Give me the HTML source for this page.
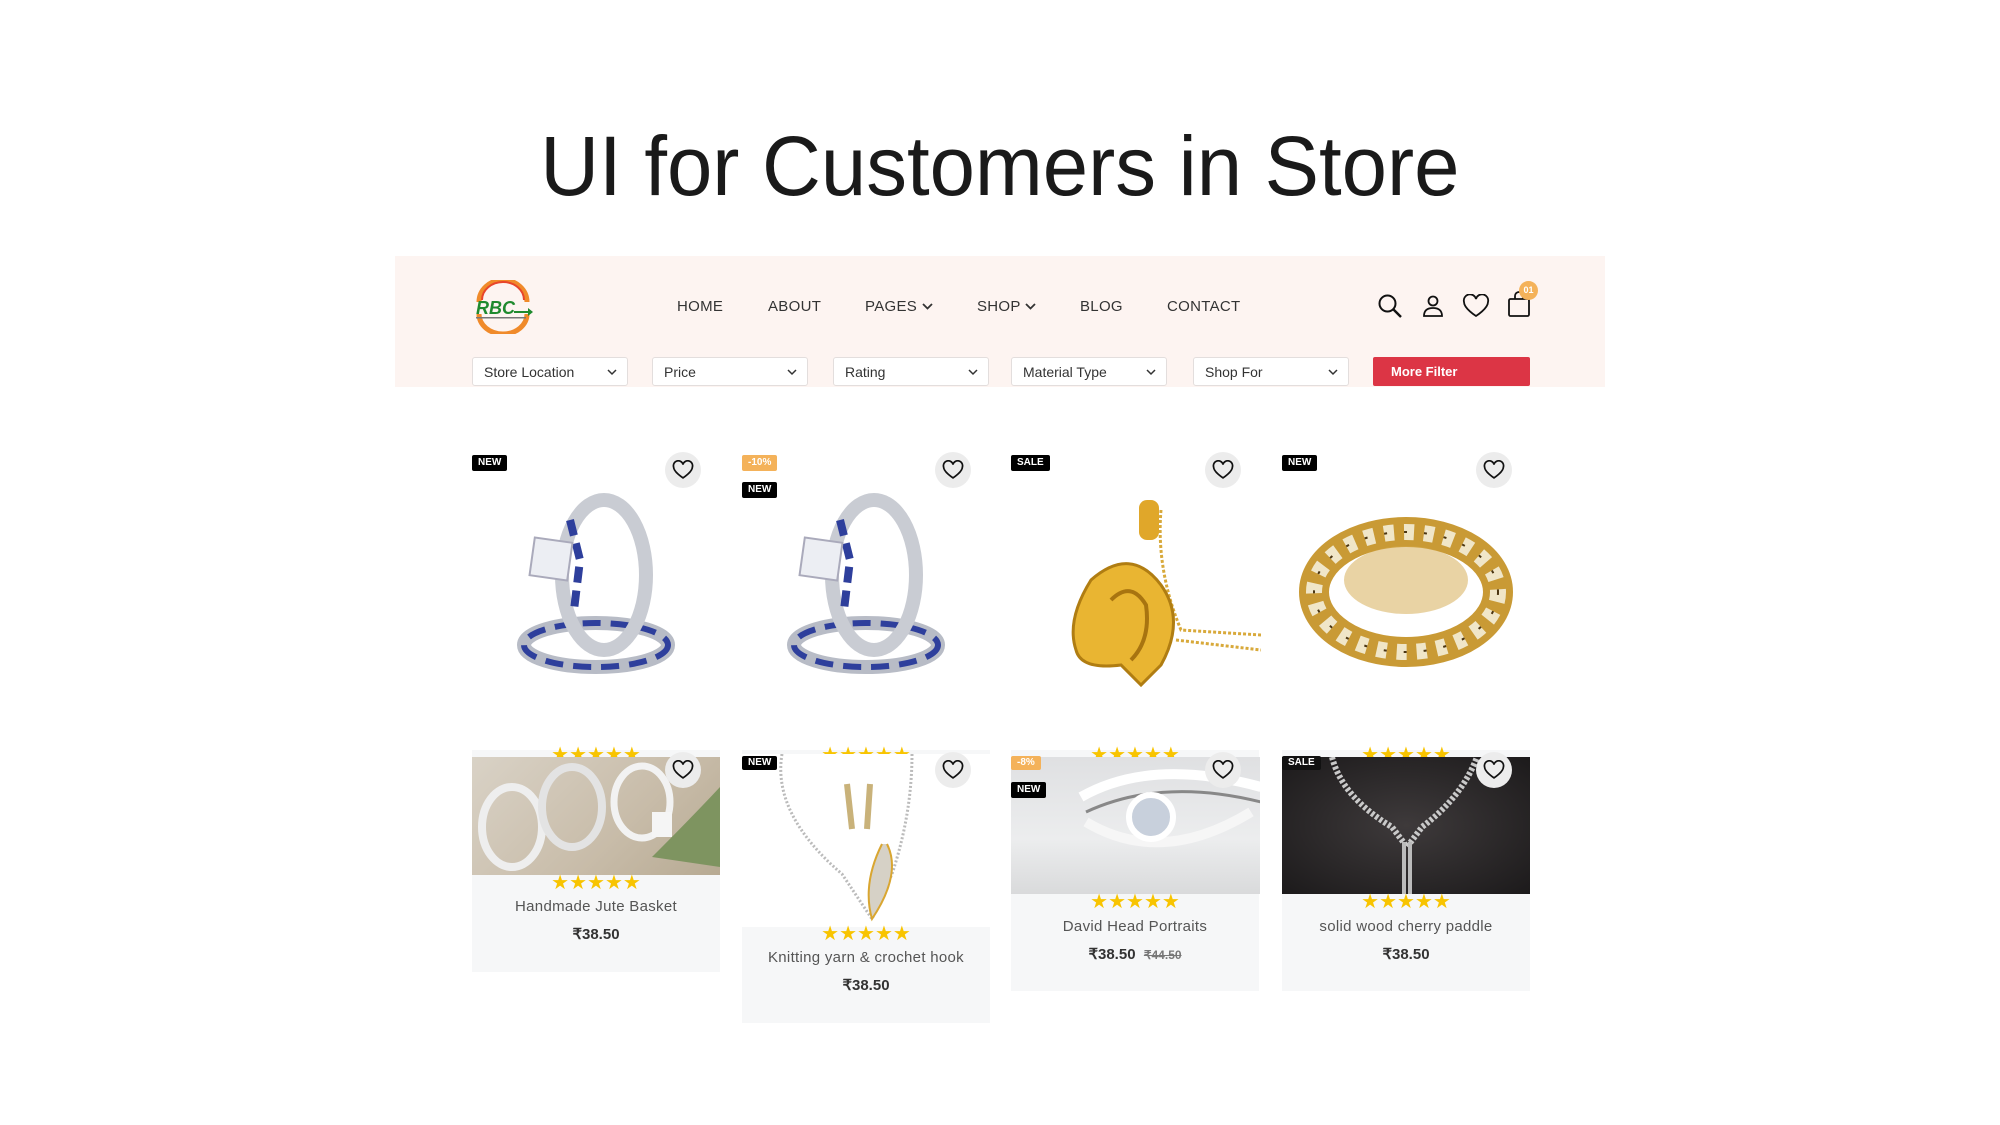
<!DOCTYPE html>
<html><head><meta charset="utf-8"><style>
*{margin:0;padding:0;box-sizing:border-box}
body{width:2000px;height:1125px;background:#fff;position:relative;overflow:hidden;font-family:"Liberation Sans",sans-serif;color:#222}
.a{position:absolute}
.title{position:absolute;left:0;width:2000px;top:116px;text-align:center;font-size:84px;line-height:100px;color:#1a1a1a}
.title span{display:inline-block;transform:scaleX(0.97);transform-origin:center}
.hdr{position:absolute;left:395px;top:256px;width:1210px;height:131px;background:#fdf4f1}
.nav{position:absolute;top:298px;font-size:15px;color:#333;letter-spacing:0.3px}
.sel{position:absolute;top:357px;height:29px;width:156px;background:#fff;border:1px solid #e3dedd;border-radius:3px;font-size:14px;padding:6px 0 0 11px;color:#333}
.sel svg{position:absolute;right:10px;top:11px}
.badge{position:absolute;height:16px;font-size:10px;font-weight:bold;color:#fff;background:#000;padding:2px 6px;border-radius:2px;line-height:12px}
.or{background:#f4b25a}
.hc{position:absolute;width:36px;height:36px;border-radius:50%;background:#ececec}
.hc svg{position:absolute;left:7px;top:8px}
.card{position:absolute;width:248px;background:#f6f7f8}
.stars{position:absolute;left:0;width:248px;text-align:center;color:#f8c400;font-size:20px;letter-spacing:0px;line-height:18px}
.nm{position:absolute;left:0;width:248px;text-align:center;font-size:15px;color:#555;letter-spacing:0.3px}
.pr{position:absolute;left:0;width:248px;text-align:center;font-size:15px;color:#333;font-weight:bold}
</style></head><body>
<div class="title"><span>UI for Customers in Store</span></div>

<div class="hdr"></div>
<svg class="a" style="left:470px;top:280px" width="66" height="54" viewBox="0 0 66 54">
<path d="M9 22 A24 22 0 0 1 57 22" fill="none" stroke="#f08a2a" stroke-width="5"/>
<path d="M12 20 A21 18 0 0 1 54 20" fill="none" stroke="#e8452b" stroke-width="2"/>
<path d="M9 34 A24 20 0 0 0 57 34" fill="none" stroke="#f08a2a" stroke-width="5"/>
<text x="6" y="34" font-family="Liberation Sans" font-weight="bold" font-style="italic" font-size="18" fill="#1f8a2e">RBC</text>
<path d="M44 31 L58 31 L58 28 L63 32 L58 36 L58 33 L44 33z" fill="#1f8a2e"/>
<rect x="6" y="37" width="50" height="1.5" fill="#777"/>
</svg>
<div class="nav" style="left:677px">HOME</div>
<div class="nav" style="left:768px">ABOUT</div>
<div class="nav" style="left:865px">PAGES <svg width="11" height="8" viewBox="0 0 11 8"><path d="M1 1l4.5 4.5L10 1" fill="none" stroke="#333" stroke-width="1.8"/></svg></div>
<div class="nav" style="left:977px">SHOP <svg width="11" height="8" viewBox="0 0 11 8"><path d="M1 1l4.5 4.5L10 1" fill="none" stroke="#333" stroke-width="1.8"/></svg></div>
<div class="nav" style="left:1080px">BLOG</div>
<div class="nav" style="left:1167px">CONTACT</div>
<svg class="a" style="left:1377px;top:293px" width="26" height="26" viewBox="0 0 26 26"><circle cx="10.5" cy="10.5" r="8" fill="none" stroke="#111" stroke-width="2"/><path d="M16.5 16.5L24 24" stroke="#111" stroke-width="2.4"/></svg>
<svg class="a" style="left:1422px;top:294px" width="22" height="24" viewBox="0 0 22 24"><circle cx="11" cy="7" r="4.5" fill="none" stroke="#111" stroke-width="1.8"/><path d="M2 22 Q2 14 11 14 Q20 14 20 22Z" fill="none" stroke="#111" stroke-width="1.8"/></svg>
<svg class="a" style="left:1462px;top:294px" width="28" height="24" viewBox="0 0 28 24"><path d="M14 22S2 14.5 2 8A6 6 0 0 1 14 5A6 6 0 0 1 26 8C26 14.5 14 22 14 22z" fill="none" stroke="#111" stroke-width="1.8"/></svg>
<svg class="a" style="left:1507px;top:290px" width="24" height="28" viewBox="0 0 24 28"><path d="M8 9V6a4 4 0 0 1 8 0v3" fill="none" stroke="#111" stroke-width="1.8"/><rect x="2" y="9" width="20" height="17" rx="1.5" fill="none" stroke="#111" stroke-width="1.8"/></svg>
<div class="a" style="left:1519px;top:281px;width:19px;height:19px;border-radius:50%;background:#f4b25a;color:#fff;font-size:9px;font-weight:bold;text-align:center;line-height:19px">01</div>

<div class="sel" style="left:472px">Store Location<svg width="10" height="7" viewBox="0 0 10 7"><path d="M1 1l4 4 4-4" fill="none" stroke="#333" stroke-width="1.5"/></svg></div>
<div class="sel" style="left:652px">Price<svg width="10" height="7" viewBox="0 0 10 7"><path d="M1 1l4 4 4-4" fill="none" stroke="#333" stroke-width="1.5"/></svg></div>
<div class="sel" style="left:833px">Rating<svg width="10" height="7" viewBox="0 0 10 7"><path d="M1 1l4 4 4-4" fill="none" stroke="#333" stroke-width="1.5"/></svg></div>
<div class="sel" style="left:1011px">Material Type<svg width="10" height="7" viewBox="0 0 10 7"><path d="M1 1l4 4 4-4" fill="none" stroke="#333" stroke-width="1.5"/></svg></div>
<div class="sel" style="left:1193px">Shop For<svg width="10" height="7" viewBox="0 0 10 7"><path d="M1 1l4 4 4-4" fill="none" stroke="#333" stroke-width="1.5"/></svg></div>
<div class="a" style="left:1373px;top:357px;width:157px;height:29px;background:#dc3545;border-radius:2px;color:#fff;font-size:13px;font-weight:bold;padding:7px 0 0 18px">More Filter</div>

<svg class="a" style="left:472px;top:480px" width="248" height="220" viewBox="0 0 248 220">
<ellipse cx="124" cy="165" rx="72" ry="22" fill="none" stroke="#b8bcc6" stroke-width="14"/>
<ellipse cx="124" cy="165" rx="72" ry="22" fill="none" stroke="#2e3f9c" stroke-width="6" stroke-dasharray="18 10"/>
<ellipse cx="132" cy="95" rx="42" ry="75" fill="none" stroke="#c9ccd3" stroke-width="14"/>
<path d="M98 40 L108 80 L102 130" fill="none" stroke="#2e3f9c" stroke-width="8" stroke-dasharray="16 8"/>
<rect x="60" y="60" width="38" height="38" fill="#eceef3" stroke="#aab" stroke-width="2" transform="rotate(8 79 79)"/>
</svg>
<svg class="a" style="left:742px;top:480px" width="248" height="220" viewBox="0 0 248 220">
<ellipse cx="124" cy="165" rx="72" ry="22" fill="none" stroke="#b8bcc6" stroke-width="14"/>
<ellipse cx="124" cy="165" rx="72" ry="22" fill="none" stroke="#2e3f9c" stroke-width="6" stroke-dasharray="18 10"/>
<ellipse cx="132" cy="95" rx="42" ry="75" fill="none" stroke="#c9ccd3" stroke-width="14"/>
<path d="M98 40 L108 80 L102 130" fill="none" stroke="#2e3f9c" stroke-width="8" stroke-dasharray="16 8"/>
<rect x="60" y="60" width="38" height="38" fill="#eceef3" stroke="#aab" stroke-width="2" transform="rotate(8 79 79)"/>
</svg>
<svg class="a" style="left:1011px;top:490px" width="250" height="210" viewBox="0 0 250 210">
<path d="M150 20 Q145 80 170 140 L250 145" fill="none" stroke="#d8a93a" stroke-width="3" stroke-dasharray="3 2"/>
<path d="M165 150 L250 160" fill="none" stroke="#d8a93a" stroke-width="3" stroke-dasharray="3 2"/>
<rect x="128" y="10" width="20" height="40" rx="8" fill="#e0a72a"/>
<path d="M80 90 Q120 55 150 95 Q175 130 150 175 L130 195 L110 175 Q70 180 65 160 Q55 130 80 90z" fill="#e9b532" stroke="#b07d12" stroke-width="3"/>
<path d="M100 110 Q120 90 135 115 Q140 150 120 170" fill="none" stroke="#a87410" stroke-width="4"/>
</svg>
<svg class="a" style="left:1282px;top:500px" width="248" height="180" viewBox="0 0 248 180">
<ellipse cx="124" cy="92" rx="92" ry="60" fill="none" stroke="#c99a35" stroke-width="30"/>
<ellipse cx="124" cy="92" rx="92" ry="60" fill="none" stroke="#f0e6c8" stroke-width="16" stroke-dasharray="10 10"/>
<ellipse cx="124" cy="92" rx="92" ry="60" fill="none" stroke="#4a3512" stroke-width="2" stroke-dasharray="3 17"/>
<ellipse cx="124" cy="80" rx="62" ry="34" fill="#d4a84a" opacity="0.5"/>
</svg>

<div class="badge" style="left:472px;top:455px">NEW</div>
<div class="badge or" style="left:742px;top:455px">-10%</div>
<div class="badge" style="left:742px;top:482px">NEW</div>
<div class="badge" style="left:1011px;top:455px">SALE</div>
<div class="badge" style="left:1282px;top:455px">NEW</div>
<div class="hc" style="left:665px;top:452px"><svg width="22" height="20" viewBox="0 0 28 24"><path d="M14 22S2 14.5 2 8A6 6 0 0 1 14 5A6 6 0 0 1 26 8C26 14.5 14 22 14 22z" fill="none" stroke="#111" stroke-width="2.2"/></svg></div>
<div class="hc" style="left:935px;top:452px"><svg width="22" height="20" viewBox="0 0 28 24"><path d="M14 22S2 14.5 2 8A6 6 0 0 1 14 5A6 6 0 0 1 26 8C26 14.5 14 22 14 22z" fill="none" stroke="#111" stroke-width="2.2"/></svg></div>
<div class="hc" style="left:1205px;top:452px"><svg width="22" height="20" viewBox="0 0 28 24"><path d="M14 22S2 14.5 2 8A6 6 0 0 1 14 5A6 6 0 0 1 26 8C26 14.5 14 22 14 22z" fill="none" stroke="#111" stroke-width="2.2"/></svg></div>
<div class="hc" style="left:1476px;top:452px"><svg width="22" height="20" viewBox="0 0 28 24"><path d="M14 22S2 14.5 2 8A6 6 0 0 1 14 5A6 6 0 0 1 26 8C26 14.5 14 22 14 22z" fill="none" stroke="#111" stroke-width="2.2"/></svg></div>

<div class="card" style="left:472px;top:750px;height:222px">
 <div class="stars" style="top:-4px">★★★★★</div>
 <div class="a" style="left:0;top:7px;width:248px;height:118px;background:linear-gradient(135deg,#d9d2c6,#c8bca9 60%,#b7aa93)"></div>
 <svg class="a" style="left:0;top:7px" width="248" height="118" viewBox="0 0 248 118"><ellipse cx="40" cy="70" rx="30" ry="40" fill="none" stroke="#eee" stroke-width="8"/><ellipse cx="100" cy="50" rx="30" ry="40" fill="none" stroke="#e3e3e3" stroke-width="8"/><ellipse cx="170" cy="45" rx="28" ry="36" fill="none" stroke="#f2f2f2" stroke-width="7"/><path d="M180 100 Q220 60 248 30 L248 110z" fill="#7e9460"/><rect x="180" y="55" width="20" height="25" fill="#f5f5f5"/></svg>
 <div class="stars" style="top:124px">★★★★★</div>
 <div class="nm" style="top:148px">Handmade Jute Basket</div>
 <div class="pr" style="top:175px">₹38.50</div>
</div>
<div class="card" style="left:742px;top:750px;height:273px">
 <div class="stars" style="top:-4px">★★★★★</div>
 <div class="a" style="left:0;top:4px;width:248px;height:173px;background:#fff"></div>
 <svg class="a" style="left:0;top:4px" width="248" height="173" viewBox="0 0 248 173"><path d="M40 0 Q30 60 100 120 L130 165 L150 120 Q170 60 170 0" fill="none" stroke="#bbb" stroke-width="3" stroke-dasharray="2 2"/><path d="M105 30 L110 75 M128 30 L125 75" stroke="#c9b27a" stroke-width="6"/><path d="M140 90 Q120 130 130 165 Q160 120 145 90" fill="#d6d1c6" stroke="#d9a631" stroke-width="2"/></svg>
 <div class="stars" style="top:175px">★★★★★</div>
 <div class="nm" style="top:199px">Knitting yarn &amp; crochet hook</div>
 <div class="pr" style="top:226px">₹38.50</div>
</div>
<div class="card" style="left:1011px;top:750px;height:241px">
 <div class="stars" style="top:-4px">★★★★★</div>
 <div class="a" style="left:0;top:7px;width:249px;height:137px;background:linear-gradient(180deg,#dfe0e2,#ecedee 60%,#d9dadb)"></div>
 <svg class="a" style="left:0;top:7px" width="249" height="137" viewBox="0 0 249 137"><path d="M70 40 Q140 0 250 30" fill="none" stroke="#fff" stroke-width="10"/><path d="M75 55 Q150 20 250 45" fill="none" stroke="#888" stroke-width="3"/><path d="M75 65 Q150 110 240 55" fill="none" stroke="#f6f6f6" stroke-width="10"/><circle cx="140" cy="60" r="22" fill="#c8d0dc" stroke="#fff" stroke-width="6"/></svg>
 <div class="stars" style="top:143px">★★★★★</div>
 <div class="nm" style="top:168px">David Head Portraits</div>
 <div class="pr" style="top:195px">₹38.50 &nbsp;<span style="font-size:12px;color:#777;text-decoration:line-through">₹44.50</span></div>
</div>
<div class="card" style="left:1282px;top:750px;height:241px">
 <div class="stars" style="top:-4px">★★★★★</div>
 <div class="a" style="left:0;top:7px;width:248px;height:137px;background:radial-gradient(ellipse at 50% 50%,#3e3a3b,#1c1a1b)"></div>
 <svg class="a" style="left:0;top:7px" width="248" height="137" viewBox="0 0 248 137"><path d="M50 0 Q60 40 110 70 L125 90 L140 70 Q180 40 195 0" fill="none" stroke="#c9c9c9" stroke-width="6" stroke-dasharray="3 2"/><path d="M122 85 L122 137 M128 85 L128 137" stroke="#bbb" stroke-width="4"/></svg>
 <div class="stars" style="top:143px">★★★★★</div>
 <div class="nm" style="top:168px">solid wood cherry paddle</div>
 <div class="pr" style="top:195px">₹38.50</div>
</div>
<div class="badge" style="left:742px;top:756px;height:14px;line-height:10px">NEW</div>
<div class="badge or" style="left:1011px;top:756px;height:14px;line-height:10px">-8%</div>
<div class="badge" style="left:1011px;top:782px;height:16px">NEW</div>
<div class="badge" style="left:1282px;top:756px;height:14px;line-height:10px;background:#111">SALE</div>
<div class="hc" style="left:665px;top:752px"><svg width="22" height="20" viewBox="0 0 28 24"><path d="M14 22S2 14.5 2 8A6 6 0 0 1 14 5A6 6 0 0 1 26 8C26 14.5 14 22 14 22z" fill="none" stroke="#111" stroke-width="2.2"/></svg></div>
<div class="hc" style="left:935px;top:752px"><svg width="22" height="20" viewBox="0 0 28 24"><path d="M14 22S2 14.5 2 8A6 6 0 0 1 14 5A6 6 0 0 1 26 8C26 14.5 14 22 14 22z" fill="none" stroke="#111" stroke-width="2.2"/></svg></div>
<div class="hc" style="left:1205px;top:752px"><svg width="22" height="20" viewBox="0 0 28 24"><path d="M14 22S2 14.5 2 8A6 6 0 0 1 14 5A6 6 0 0 1 26 8C26 14.5 14 22 14 22z" fill="none" stroke="#111" stroke-width="2.2"/></svg></div>
<div class="hc" style="left:1476px;top:752px"><svg width="22" height="20" viewBox="0 0 28 24"><path d="M14 22S2 14.5 2 8A6 6 0 0 1 14 5A6 6 0 0 1 26 8C26 14.5 14 22 14 22z" fill="none" stroke="#111" stroke-width="2.2"/></svg></div>
</body></html>
